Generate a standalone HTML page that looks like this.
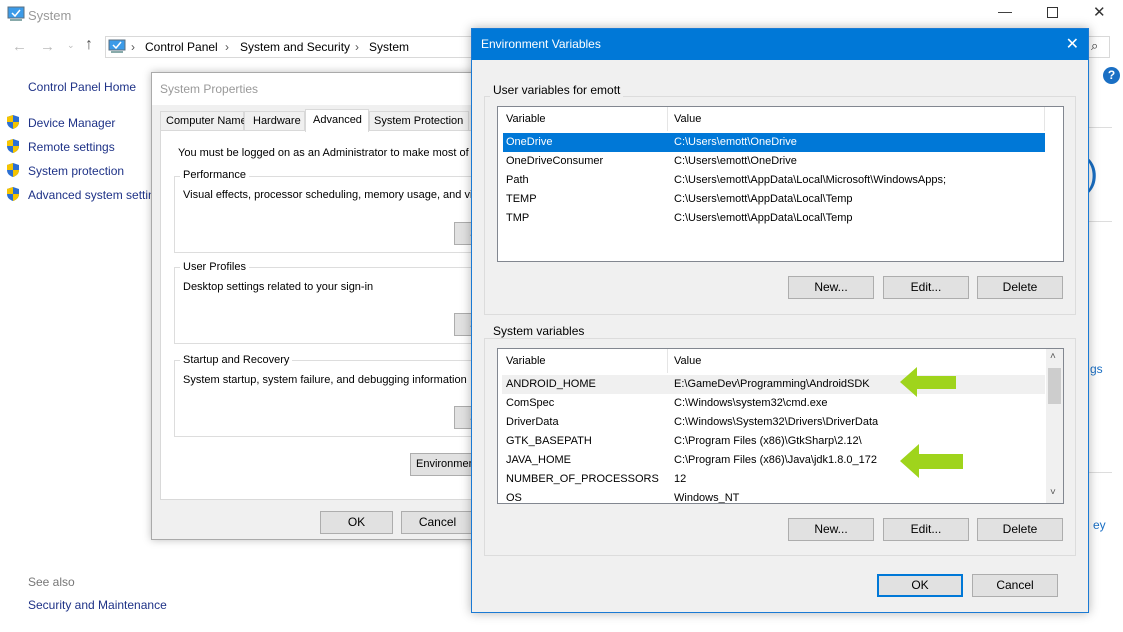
<!DOCTYPE html>
<html><head><meta charset="utf-8"><style>
*{margin:0;padding:0;box-sizing:border-box}
body{width:1123px;height:632px;overflow:hidden;background:#fff;font-family:"Liberation Sans",sans-serif;font-size:12px;color:#000;position:relative}
.a{position:absolute;white-space:nowrap}
.dlg{font-size:11px}
.btn{position:absolute;background:#e1e1e1;border:1px solid #adadad;text-align:center;line-height:21px;font-size:12px}
.row{position:absolute;left:0;height:19px;line-height:19px;width:100%}
.row span{position:absolute}
</style></head><body>
<svg class="a" style="left:7px;top:6px" width="18" height="16"><rect x="1" y="1" width="16" height="11" fill="#3c9be8" stroke="#5a6f80"/><path d="M5 7l3 3 5-6" stroke="#fff" fill="none" stroke-width="1.5"/><rect x="3" y="13" width="12" height="2" fill="#8aa"/></svg>
<div class="a" style="left:28px;top:8px;font-size:13px;color:#999">System</div>
<div class="a" style="left:998px;top:3px;font-size:14px;color:#333">—</div>
<div class="a" style="left:1047px;top:7px;width:11px;height:11px;border:1px solid #333"></div>
<div class="a" style="left:1093px;top:3px;font-size:15px;color:#333">✕</div>
<div class="a" style="left:12px;top:38px;font-size:15px;color:#bbb">←</div>
<div class="a" style="left:40px;top:38px;font-size:15px;color:#bbb">→</div>
<div class="a" style="left:67px;top:40px;font-size:9px;color:#bbb">⌄</div>
<div class="a" style="left:85px;top:36px;font-size:16px;color:#555">↑</div>
<div class="a" style="left:105px;top:36px;width:400px;height:22px;border:1px solid #d9d9d9"></div>
<svg class="a" style="left:108px;top:39px" width="18" height="16"><rect x="1" y="1" width="16" height="10" fill="#3c9be8" stroke="#5a6f80"/><path d="M5 6l3 3 5-6" stroke="#fff" fill="none" stroke-width="1.5"/><rect x="3" y="12" width="12" height="2" fill="#8aa"/></svg>
<div class="a" style="left:131px;top:40px;font-size:12px;color:#555">›</div>
<div class="a" style="left:145px;top:40px;font-size:12px">Control Panel</div>
<div class="a" style="left:225px;top:40px;font-size:12px;color:#555">›</div>
<div class="a" style="left:240px;top:40px;font-size:12px">System and Security</div>
<div class="a" style="left:355px;top:40px;font-size:12px;color:#555">›</div>
<div class="a" style="left:369px;top:40px;font-size:12px">System</div>
<div class="a" style="left:1080px;top:36px;width:30px;height:22px;border:1px solid #d9d9d9;border-left:none"></div>
<div class="a" style="left:1091px;top:38px;font-size:13px;color:#333">⌕</div>
<div class="a" style="left:28px;top:80px;font-size:12px;color:#1e3287">Control Panel Home</div>
<div class="a" style="left:28px;top:116px;color:#1e3287">Device Manager</div>
<div class="a" style="left:28px;top:140px;color:#1e3287">Remote settings</div>
<div class="a" style="left:28px;top:164px;color:#1e3287">System protection</div>
<div class="a" style="left:28px;top:188px;color:#1e3287">Advanced system settings</div>
<svg class="a" style="left:6px;top:114px" width="14" height="96">
<g id="s"><path d="M7 1L1 3v5c0 4 3 6 6 7 3-1 6-3 6-7V3z" fill="#2c6fd2"/><path d="M7 1v7H1V3zM7 8h6c0 4-3 6-6 7z" fill="#f5c400"/></g>
<use href="#s" y="24"/><use href="#s" y="48"/><use href="#s" y="72"/></svg>
<div class="a" style="left:28px;top:575px;color:#777">See also</div>
<div class="a" style="left:28px;top:598px;color:#1e3287">Security and Maintenance</div>
<div class="a" style="left:1103px;top:67px;width:17px;height:17px;border-radius:50%;background:#1a6fc4;color:#fff;font-weight:bold;text-align:center;line-height:17px;font-size:12px">?</div>
<div class="a" style="left:1088px;top:127px;width:24px;height:1px;background:#ddd"></div>
<div class="a" style="left:1088px;top:221px;width:24px;height:1px;background:#ddd"></div>
<div class="a" style="left:1088px;top:472px;width:24px;height:1px;background:#ddd"></div>
<div class="a" style="left:1086px;top:152px;font-size:36px;color:#1a6fc4">)</div>
<div class="a" style="left:1090px;top:362px;color:#1a6fc4">gs</div>
<div class="a" style="left:1093px;top:518px;color:#1a6fc4">ey</div>

<div class="a dlg" style="left:151px;top:72px;width:340px;height:468px;background:#f0f0f0;border:1px solid #aaa;box-shadow:0 0 8px rgba(0,0,0,.25)">
<div style="height:32px;background:#fff"></div>
<div class="a" style="left:8px;top:9px;color:#999;font-size:12px">System Properties</div>
<div class="a" style="left:8px;top:57px;width:330px;height:370px;background:#fff;border:1px solid #d9d9d9"></div>
<div class="a" style="left:8px;top:38px;height:20px;width:84px;border:1px solid #d9d9d9;background:#f0f0f0;line-height:18px;padding-left:5px">Computer Name</div>
<div class="a" style="left:92px;top:38px;height:20px;width:61px;border:1px solid #d9d9d9;background:#f0f0f0;line-height:18px;padding-left:8px">Hardware</div>
<div class="a" style="left:153px;top:36px;height:23px;width:64px;border:1px solid #d9d9d9;border-bottom:none;background:#fff;line-height:20px;padding-left:7px">Advanced</div>
<div class="a" style="left:217px;top:38px;height:20px;width:100px;border:1px solid #d9d9d9;background:#f0f0f0;line-height:18px;padding-left:4px">System Protection</div>
<div class="a" style="left:26px;top:74px">You must be logged on as an Administrator to make most of these changes.</div>
<div class="a" style="left:22px;top:103px;width:310px;height:77px;border:1px solid #ddd"></div>
<div class="a" style="left:28px;top:96px;background:#fff;padding:0 3px">Performance</div>
<div class="a" style="left:31px;top:116px">Visual effects, processor scheduling, memory usage, and virtual memory</div>
<div class="btn" style="left:302px;top:149px;width:40px">S</div>
<div class="a" style="left:22px;top:194px;width:310px;height:77px;border:1px solid #ddd"></div>
<div class="a" style="left:28px;top:188px;background:#fff;padding:0 3px">User Profiles</div>
<div class="a" style="left:31px;top:208px">Desktop settings related to your sign-in</div>
<div class="btn" style="left:302px;top:240px;width:40px">S</div>
<div class="a" style="left:22px;top:287px;width:310px;height:77px;border:1px solid #ddd"></div>
<div class="a" style="left:28px;top:281px;background:#fff;padding:0 3px">Startup and Recovery</div>
<div class="a" style="left:31px;top:301px">System startup, system failure, and debugging information</div>
<div class="btn" style="left:302px;top:333px;width:40px">S</div>
<div class="btn" style="left:258px;top:380px;width:80px;text-align:left;padding-left:5px;font-size:11px">Environment Variables...</div>
<div class="btn" style="left:168px;top:438px;width:73px">OK</div>
<div class="btn" style="left:249px;top:438px;width:73px">Cancel</div>
</div>

<div class="a dlg" style="left:471px;top:28px;width:618px;height:585px;background:#f0f0f0;border:1px solid #1a7ad4;box-shadow:0 0 10px rgba(0,0,0,.3)">
<div style="height:31px;background:#0078d7;color:#fff;line-height:31px;padding-left:9px;font-size:12px">Environment Variables<span style="position:absolute;right:9px;top:0;font-size:16px">✕</span></div>
<div class="a" style="left:12px;top:67px;width:592px;height:219px;border:1px solid #dcdcdc"></div>
<div class="a" style="left:18px;top:54px;background:#f0f0f0;padding:0 3px;font-size:12px">User variables for emott</div>
<div class="a" style="left:25px;top:77px;width:567px;height:156px;background:#fff;border:1px solid #828790">
 <div class="row" style="top:3px"><span style="left:8px">Variable</span><span style="left:176px">Value</span></div>
 <div class="a" style="left:169px;top:0;width:1px;height:24px;background:#e5e5e5"></div>
 <div class="a" style="left:546px;top:0;width:1px;height:24px;background:#e5e5e5"></div>
 <div class="row" style="top:26px;left:5px;width:542px;background:#0078d7;color:#fff"><span style="left:3px">OneDrive</span><span style="left:171px">C:\Users\emott\OneDrive</span></div>
 <div class="row" style="top:45px"><span style="left:8px">OneDriveConsumer</span><span style="left:176px">C:\Users\emott\OneDrive</span></div>
 <div class="row" style="top:64px"><span style="left:8px">Path</span><span style="left:176px">C:\Users\emott\AppData\Local\Microsoft\WindowsApps;</span></div>
 <div class="row" style="top:83px"><span style="left:8px">TEMP</span><span style="left:176px">C:\Users\emott\AppData\Local\Temp</span></div>
 <div class="row" style="top:102px"><span style="left:8px">TMP</span><span style="left:176px">C:\Users\emott\AppData\Local\Temp</span></div>
</div>
<div class="btn" style="left:316px;top:247px;width:86px">New...</div>
<div class="btn" style="left:411px;top:247px;width:86px">Edit...</div>
<div class="btn" style="left:505px;top:247px;width:86px">Delete</div>

<div class="a" style="left:12px;top:309px;width:592px;height:218px;border:1px solid #dcdcdc"></div>
<div class="a" style="left:18px;top:295px;background:#f0f0f0;padding:0 3px;font-size:12px">System variables</div>
<div class="a" style="left:25px;top:319px;width:567px;height:156px;background:#fff;border:1px solid #828790;overflow:hidden">
 <div class="row" style="top:3px"><span style="left:8px">Variable</span><span style="left:176px">Value</span></div>
 <div class="a" style="left:169px;top:0;width:1px;height:24px;background:#e5e5e5"></div>
 <div class="row" style="top:26px;left:4px;width:543px;background:#f0f0f0"><span style="left:4px">ANDROID_HOME</span><span style="left:172px">E:\GameDev\Programming\AndroidSDK</span></div>
 <div class="row" style="top:45px"><span style="left:8px">ComSpec</span><span style="left:176px">C:\Windows\system32\cmd.exe</span></div>
 <div class="row" style="top:64px"><span style="left:8px">DriverData</span><span style="left:176px">C:\Windows\System32\Drivers\DriverData</span></div>
 <div class="row" style="top:83px"><span style="left:8px">GTK_BASEPATH</span><span style="left:176px">C:\Program Files (x86)\GtkSharp\2.12\</span></div>
 <div class="row" style="top:102px"><span style="left:8px">JAVA_HOME</span><span style="left:176px">C:\Program Files (x86)\Java\jdk1.8.0_172</span></div>
 <div class="row" style="top:121px"><span style="left:8px">NUMBER_OF_PROCESSORS</span><span style="left:176px">12</span></div>
 <div class="row" style="top:140px"><span style="left:8px">OS</span><span style="left:176px">Windows_NT</span></div>
 <div class="a" style="left:548px;top:0;width:17px;height:154px;background:#f0f0f0"></div>
 <div class="a" style="left:550px;top:19px;width:13px;height:36px;background:#cdcdcd"></div>
 <div class="a" style="left:552px;top:2px;font-size:10px;color:#555">˄</div>
 <div class="a" style="left:552px;top:138px;font-size:10px;color:#555">˅</div>
</div>
<svg class="a" style="left:428px;top:338px" width="70" height="30"><path d="M0 15L17 0v9h39v13H17v8z" fill="#9fd41c"/></svg>
<svg class="a" style="left:428px;top:415px" width="70" height="34"><path d="M0 17L19 0v10h44v15H19v9z" fill="#9fd41c"/></svg>
<div class="btn" style="left:316px;top:489px;width:86px">New...</div>
<div class="btn" style="left:411px;top:489px;width:86px">Edit...</div>
<div class="btn" style="left:505px;top:489px;width:86px">Delete</div>
<div class="btn" style="left:405px;top:545px;width:86px;border:2px solid #0078d7;line-height:19px">OK</div>
<div class="btn" style="left:500px;top:545px;width:86px">Cancel</div>
</div>
</body></html>
